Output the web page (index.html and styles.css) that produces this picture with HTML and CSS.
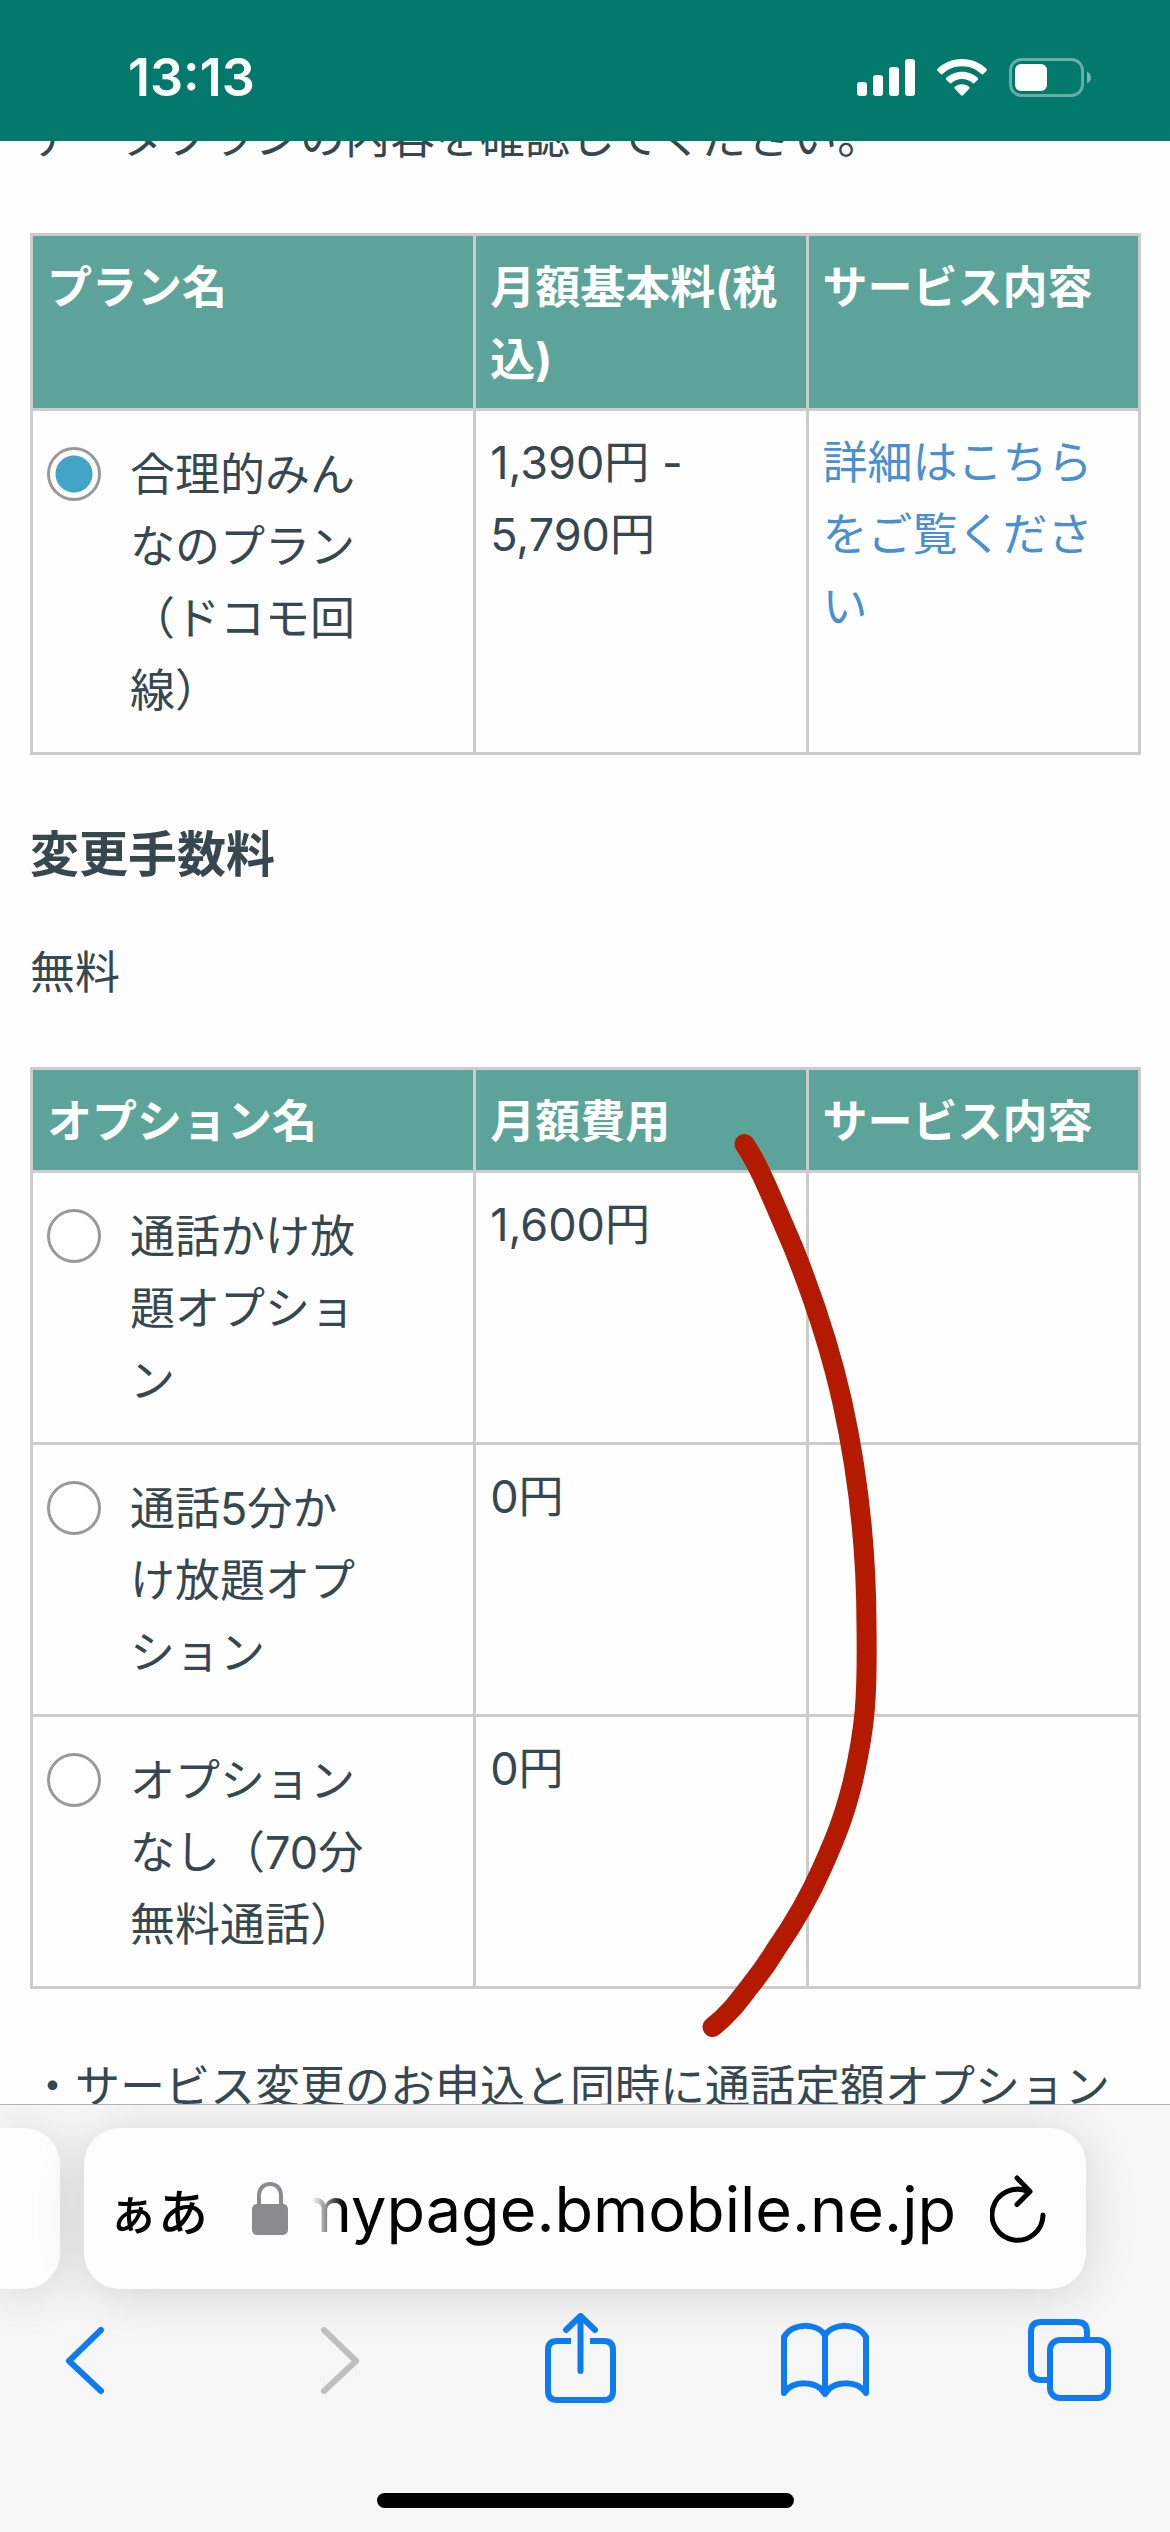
FILE: index.html
```
<!DOCTYPE html>
<html lang="ja">
<head>
    <meta charset="UTF-8">
    <meta name="viewport" content="width=device-width, initial-scale=1.0">
    <title>プラン変更</title>
    <link rel="stylesheet" href="styles.css">
</head>
<body>
    <header class="status-bar">
        <time class="clock">13:13</time>
        <div class="status-icons">
            <svg width="58" height="38" viewBox="0 0 58 38" fill="#fff" aria-hidden="true">
                <rect x="0" y="23" width="10" height="14" rx="3"/>
                <rect x="16" y="16" width="10" height="21" rx="3"/>
                <rect x="32" y="8" width="10" height="29" rx="3"/>
                <rect x="48" y="0" width="10" height="37" rx="3"/>
            </svg>
            <svg width="50" height="38" viewBox="0 0 50 38" fill="#fff" aria-hidden="true">
                <path d="M25 0C35 0 43.500 4 49.500 9.800Q50.500 10.800 49.600 11.700L46.300 15Q45.400 15.900 44.400 15C39 10 32.500 7.300 25 7.300S11 10 5.600 15Q4.600 15.900 3.700 15L.400 11.700Q-.500 10.800.500 9.800C6.500 4 15 0 25 0Z"/>
                <path d="M25 12.700C31 12.700 36.500 15 40.700 18.800Q41.700 19.800 40.800 20.700L37.400 24Q36.500 24.900 35.500 24C32.500 21.500 29 20 25 20S17.500 21.500 14.500 24Q13.500 24.900 12.600 24L9.200 20.700Q8.300 19.800 9.300 18.800C13.500 15 19 12.700 25 12.700Z"/>
                <path d="M25 25.200C28 25.200 30.300 26.200 32.200 27.800Q33.200 28.800 32.200 29.800L26 36.200Q25 37.100 24 36.200L17.800 29.800Q16.800 28.800 17.800 27.800C19.700 26.200 22 25.200 25 25.200Z"/>
            </svg>
            <svg width="82" height="40" viewBox="0 0 82 40" aria-hidden="true">
                <rect x="1.500" y="1.500" width="72" height="36" rx="11" fill="none" stroke="#fff" stroke-opacity=".4" stroke-width="3"/>
                <rect x="6" y="6" width="32" height="27" rx="6" fill="#fff"/>
                <path d="M78 13.500Q82 15.500 82 19.500T78 25.500Z" fill="#fff" fill-opacity=".45"/>
            </svg>
        </div>
    </header>

    <main class="page">
        <div class="content">
            <p>データプランの内容を確認してください。</p>

            <table>
                <thead>
                    <tr>
                        <th class="col-name">プラン名</th>
                        <th>月額基本料(税込)</th>
                        <th>サービス内容</th>
                    </tr>
                </thead>
                <tbody>
                    <tr>
                        <td>
                            <div class="choice">
                                <input type="radio" name="plan" id="plan1" checked>
                                <label for="plan1">合理的みんなのプラン（ドコモ回線）</label>
                            </div>
                        </td>
                        <td>1,390円 - 5,790円</td>
                        <td><a href="#">詳細はこちらをご覧ください</a></td>
                    </tr>
                </tbody>
            </table>

            <h3>変更手数料</h3>
            <p class="fee">無料</p>

            <div class="options">
                <table>
                    <thead>
                        <tr>
                            <th class="col-name">オプション名</th>
                            <th>月額費用</th>
                            <th>サービス内容</th>
                        </tr>
                    </thead>
                    <tbody>
                        <tr>
                            <td>
                                <div class="choice">
                                    <input type="radio" name="option" id="option1">
                                    <label for="option1">通話かけ放題オプション</label>
                                </div>
                            </td>
                            <td>1,600円</td>
                            <td></td>
                        </tr>
                        <tr>
                            <td>
                                <div class="choice">
                                    <input type="radio" name="option" id="option2">
                                    <label for="option2">通話5分かけ放題オプション</label>
                                </div>
                            </td>
                            <td>0円</td>
                            <td></td>
                        </tr>
                        <tr>
                            <td>
                                <div class="choice">
                                    <input type="radio" name="option" id="option3">
                                    <label for="option3">オプションなし（70分無料通話）</label>
                                </div>
                            </td>
                            <td>0円</td>
                            <td></td>
                        </tr>
                    </tbody>
                </table>
                <!-- marker stroke -->
                <svg class="marker" viewBox="0 0 1110 922" aria-hidden="true">
                    <path d="M714 77C729 99 741 130 763 181C781 226 800 282 812 336C826 400 836 470 836 560C837 630 835 660 822 716C813 752 804 773 792 800C778 832 763 857 745 883C736 898 727 910 718 921C708 934 698 948 682 960"/>
                </svg>
            </div>

            <p class="note">・サービス変更のお申込と同時に通話定額オプション</p>
        </div>
    </main>

    <footer class="browser">
        <div class="tabs">
            <div class="prev-tab"></div>
            <div class="address">
                <button class="reader" type="button" aria-label="表示設定">ぁあ</button>
                <svg class="lock" width="36" height="54" viewBox="0 0 36 54" aria-hidden="true">
                    <path d="M7 24V14C7 6 12 2 18 2S29 6 29 14V24" fill="none" stroke="#8a8a8f" stroke-width="4"/>
                    <rect x="0" y="22" width="36" height="31" rx="5" fill="#8a8a8f"/>
                </svg>
                <button class="url" type="button"><span>mypage.bmobile.ne.jp</span></button>
                <button class="reload" type="button" aria-label="再読み込み">
                    <svg width="56" height="68" viewBox="0 0 56 68" fill="none" stroke="#000" stroke-width="5" stroke-linecap="round" stroke-linejoin="round">
                        <path d="M53 40A25.500 25.500 0 1 1 38 16.500"/>
                        <path d="M27 3L40 16.500L27 29.500"/>
                    </svg>
                </button>
            </div>
        </div>
        <nav class="toolbar">
            <button type="button" aria-label="戻る">
                <svg viewBox="0 0 90 90"><path d="M61 17L29 48L61 78" stroke-width="6"/></svg>
            </button>
            <button type="button" aria-label="進む" disabled>
                <svg viewBox="0 0 90 90"><path d="M38 17L70 48L38 78" stroke-width="6"/></svg>
            </button>
            <button type="button" aria-label="共有">
                <svg viewBox="0 0 90 90">
                    <path d="M38 28H24Q15 28 15 37V78Q15 87 24 87H71Q80 87 80 78V37Q80 28 71 28H57" stroke-linecap="butt"/>
                    <path d="M47.500 58V3M33 17L47.500 3L62 17"/>
                </svg>
            </button>
            <button type="button" aria-label="ブックマーク">
                <svg viewBox="0 0 90 90">
                    <path d="M46 22C38 10 14 9 5 24V80C14 67 38 67 46 81C54 67 78 67 87 80V24C78 9 54 10 46 22ZM46 22V81"/>
                </svg>
            </button>
            <button type="button" aria-label="タブ">
                <svg viewBox="0 0 90 90">
                    <path d="M62 26V19Q62 9 52 9H16Q6 9 6 19V57Q6 67 16 67H24" stroke-linecap="butt"/>
                    <rect x="25" y="27" width="58" height="58" rx="10"/>
                </svg>
            </button>
        </nav>
        <div class="home-indicator"></div>
    </footer>
</body>
</html>
```
FILE: styles.css
```
* {
    box-sizing: border-box;
}

body {
    display: flex;
    flex-direction: column;
    height: 100vh;
    margin: 0;
    background-color: #fefefe;
    color: #37474f;
    font-family: Inter, "Noto Sans CJK JP", sans-serif;
    font-size: 45px;
    line-height: 72px;
}

button {
    padding: 0;
    border: 0;
    background: none;
    color: #000;
    font-family: inherit;
}

svg {
    display: block;
}

/* status bar */
.status-bar {
    display: flex;
    flex-shrink: 0;
    justify-content: space-between;
    align-items: center;
    height: 141px;
    padding: 15px 79px 0 128px;
    background-color: #02796b;
    color: #fff;
}

.clock {
    font-size: 52px;
    font-weight: 600;
}

.status-icons {
    display: flex;
    align-items: center;
    gap: 22px;
}

/* page */
.page {
    flex: 1;
    min-height: 0;
    overflow: hidden;
}

/* scrolled up, the first line sits partly under the status bar */
.content {
    margin-top: -39px;
    padding: 0 29px 0 30px;
}

p,
h3 {
    margin: 0;
}

h3 {
    margin-top: 64px;
    font-size: 49px;
    font-weight: 700;
}

.fee {
    margin-top: 46px;
}

table {
    width: 100%;
    margin-top: 59px;
    border-collapse: collapse;
    table-layout: fixed;
}

th,
td {
    padding: 16px 14px 12px;
    border: 3px solid #ccc;
    text-align: left;
    vertical-align: top;
}

th {
    background-color: #5ca49a;
    color: #fff;
    font-weight: 700;
}

.col-name {
    width: 40%;
}

td a {
    color: #4a90cf;
    text-decoration: none;
}

.choice {
    display: flex;
    align-items: flex-start;
    gap: 29px;
    padding: 12px 0 13px;
}

.choice label {
    width: 240px;
}

.choice input {
    flex-shrink: 0;
    appearance: none;
    width: 54px;
    height: 54px;
    margin: 8px 0 0;
    border: 3px solid #999;
    border-radius: 50%;
    background-color: #fff;
}

.choice input:checked {
    background: radial-gradient(circle, #40a5c7 18px, #fff 19px);
}

.options {
    position: relative;
    margin-top: 58px;
}

.options table {
    margin-top: 0;
}

.marker {
    position: absolute;
    top: 0;
    left: 0;
    width: 100%;
    height: 100%;
    overflow: visible;
    fill: none;
    stroke: #b41a00;
    stroke-width: 20px;
    stroke-linecap: round;
    stroke-linejoin: round;
    pointer-events: none;
}

.note {
    margin-top: 62px;
    white-space: nowrap;
}

/* browser controls */
.browser {
    flex-shrink: 0;
    padding: 23px 0 24px;
    border-top: 1px solid #b4b4b6;
    background-color: #f6f6f7;
    overflow: hidden;
}

.tabs {
    display: flex;
    gap: 24px;
    height: 161px;
    padding-right: 84px;
}

.prev-tab,
.address {
    background-color: #fdfdfd;
    box-shadow: 0 6px 50px rgba(0, 0, 0, 0.14);
}

.prev-tab {
    width: 60px;
    border-radius: 0 36px 36px 0;
}

.address {
    display: flex;
    flex: 1;
    align-items: center;
    min-width: 0;
    padding: 0 40px 0 24px;
    border-radius: 36px;
}

.reader {
    font-size: 50px;
    font-weight: 500;
    white-space: nowrap;
}

.lock {
    flex-shrink: 0;
    margin: 0 24px 0 44px;
}

.url {
    display: flex;
    flex: 1;
    justify-content: flex-end;
    min-width: 0;
    margin-right: 34px;
    overflow: hidden;
    font-size: 63px;
    line-height: 80px;
    -webkit-mask-image: linear-gradient(to right, transparent, #000 32px);
    mask-image: linear-gradient(to right, transparent, #000 32px);
}

.toolbar {
    display: flex;
    justify-content: space-between;
    padding: 24px 55px 0 40px;
}

.toolbar button {
    width: 90px;
    height: 90px;
}

.toolbar svg {
    fill: none;
    stroke: #0f7bf0;
    stroke-width: 6px;
    stroke-linecap: round;
    stroke-linejoin: round;
}

.toolbar button:disabled svg {
    stroke: #bfbfc0;
}

.home-indicator {
    width: 417px;
    height: 15px;
    margin: 90px auto 0;
    border-radius: 8px;
    background-color: #000;
}
```
